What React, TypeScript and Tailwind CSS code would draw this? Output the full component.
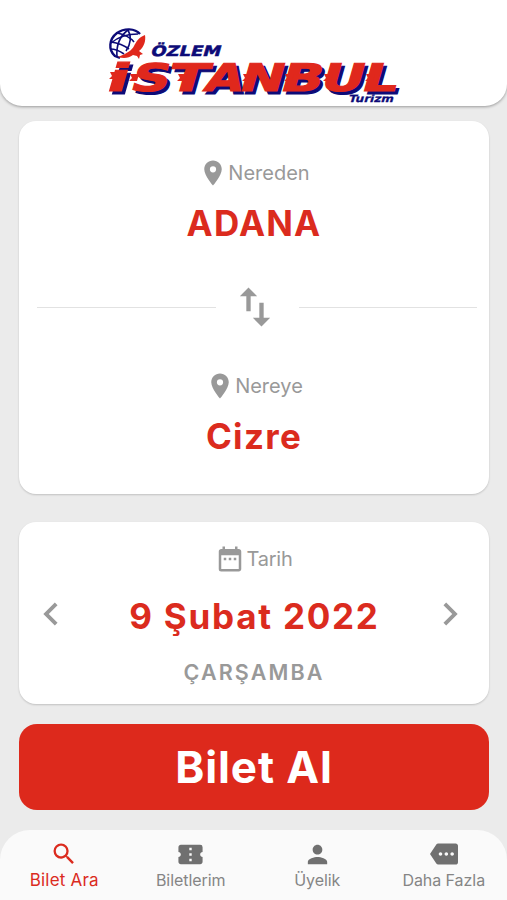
import type { ReactNode } from "react";
import {
  MdChevronLeft,
  MdChevronRight,
  MdConfirmationNumber,
  MdDateRange,
  MdMore,
  MdPerson,
  MdPlace,
  MdSearch,
  MdSwapVert,
} from "react-icons/md";

// Letter, left edge on the baseline and drawn width of the wordmark.
const letters: [string, number, number][] = [
  ["i", -3, 22],
  ["S", 21, 39],
  ["T", 58, 40],
  ["A", 95, 38],
  ["N", 130, 44],
  ["B", 171, 42],
  ["U", 211, 43],
  ["L", 252, 36],
];

// Speed marks on the left side of the letters.
const spikes = [
  [115, 74], [135, 76], [183, 76], [248, 76], [290, 76], [329, 76], [371, 76],
];

function Wordmark({ x, y, color }: { x: number; y: number; color: string }) {
  return (
    <text
      transform={`translate(${x} ${y}) skewX(-16)`}
      fontSize="38"
      fill={color}
      stroke={color}
      strokeWidth="1.1"
      strokeLinejoin="miter"
    >
      {letters.map(([letter, left, width]) => (
        <tspan key={left} x={left} textLength={width} lengthAdjust="spacingAndGlyphs">
          {letter}
        </tspan>
      ))}
    </text>
  );
}

function Logo() {
  return (
    <svg viewBox="100 22 310 84" className="h-[84px] w-[310px]" aria-label="Özlem İstanbul Turizm">
      <g fill="none" stroke="#0d0b78" strokeWidth="1.6">
        <path d="M141 34C136 28 125 28 118 33C110 39 109 50 116 56L121 58" strokeWidth="2.4" />
        <path d="M129 30C121 36 117 45 118 57" />
        <path d="M129 30C133 37 131 45 127 51" />
        <path d="M118 33C125 34 132 38 135 42" />
        <path d="M112 42C119 43 126 46 130 49" />
        <path d="M111 49C116 49 121 51 125 54" />
        <path d="M112 43C119 37 129 34 139 34" />
      </g>
      <path
        d="M146 35C140 37 137 42 135 46C133 50 129 53 119 57C125 59 130 58 134 55L138 56L140 59L141 55L144 54L140 51C145 47 147 41 146 35Z"
        fill="#e0281c"
      />
      <g fontFamily="'DejaVu Sans', 'Liberation Sans', sans-serif" fontWeight="700">
        <text
          transform="translate(151 55.5) skewX(-16)"
          fontSize="14.5"
          textLength="70"
          lengthAdjust="spacingAndGlyphs"
          fill="#0d0b78"
          stroke="#0d0b78"
          strokeWidth="0.5"
        >
          ÖZLEM
        </text>
        <Wordmark x={111.5} y={93.5} color="#0d0b78" />
        <Wordmark x={108.5} y={90.5} color="#e0281c" />
        <text
          transform="translate(349 102) skewX(-16)"
          fontSize="10"
          textLength="45"
          lengthAdjust="spacingAndGlyphs"
          fill="#0d0b78"
          stroke="#0d0b78"
          strokeWidth="0.3"
        >
          Turizm
        </text>
      </g>
      {spikes.map(([x, y]) => (
        <path key={x} d={`M${x - 4} ${y - 2}h9l-2 7h-8l3-3z`} fill="#e0281c" />
      ))}
    </svg>
  );
}

function Caption({ icon, children }: { icon: ReactNode; children: ReactNode }) {
  return (
    <div className="flex h-[30px] items-center justify-center text-xl leading-[30px] text-[#999]">
      {icon}
      {children}
    </div>
  );
}

function Tab({ icon, label, active = false }: { icon: ReactNode; label: string; active?: boolean }) {
  return (
    <button
      className={
        active
          ? "flex flex-1 flex-col items-center pl-px text-[17px] tracking-[0.2px] text-[#db2b1e]"
          : "flex flex-1 flex-col items-center text-base tracking-[-0.05px] text-[#858585]"
      }
    >
      <span className={active ? "flex h-7 items-center" : "flex h-7 items-center text-[#707070]"}>{icon}</span>
      <span className="leading-6 whitespace-nowrap">{label}</span>
    </button>
  );
}

export default function App() {
  return (
    <div className="flex h-[900px] w-[507px] flex-col overflow-hidden bg-[#ebebeb] font-['Inter','Liberation_Sans',sans-serif]">
      <header className="flex h-[106px] shrink-0 justify-center rounded-b-[22px] bg-white pt-[22px] shadow-[0_1px_3px_rgba(0,0,0,0.35)]">
        <Logo />
      </header>

      <main className="flex flex-1 flex-col pr-[18px] pl-[19px] pt-[15px]">
        <section className="flex h-[373px] flex-col rounded-[17px] bg-white pt-[37px] shadow-[0_1px_2px_rgba(0,0,0,0.18)]">
          <Caption icon={<MdPlace size={30} />}>Nereden</Caption>
          <div className="mt-[15px] text-center text-[35px] leading-10 font-bold tracking-[1.2px] text-[#db2b1e]">
            ADANA
          </div>
          <div className="mt-[38px] flex h-[52px] items-center pr-3 pl-[18px]">
            <div className="h-px flex-1 bg-[#e2e2e2]" />
            <div className="flex w-[83px] justify-center pr-1 text-[#999]">
              <MdSwapVert size={52} />
            </div>
            <div className="h-px flex-1 bg-[#e2e2e2]" />
          </div>
          <div className="mt-[38px]">
            <Caption icon={<MdPlace size={30} />}>Nereye</Caption>
          </div>
          <div className="mt-[15px] text-center text-[35px] leading-10 font-bold tracking-[1.3px] text-[#db2b1e]">
            Cizre
          </div>
        </section>

        <section className="mt-7 flex h-[182px] flex-col rounded-[17px] bg-white pt-[22px] shadow-[0_1px_2px_rgba(0,0,0,0.18)]">
          <Caption icon={<MdDateRange size={30} />}>
            <span className="pl-px tracking-[-0.2px]">Tarih</span>
          </Caption>
          <div className="mt-[17px] flex h-[46px] items-center justify-between pr-4 pl-[9px] text-[#999]">
            <MdChevronLeft size={46} />
            <span className="pt-[3px] pl-[8px] text-[35px] leading-10 font-bold tracking-[1.75px] text-[#db2b1e]">
              9 Şubat 2022
            </span>
            <MdChevronRight size={46} />
          </div>
          <div className="mt-[20px] text-center text-[21.5px] leading-[30px] font-semibold tracking-[2.1px] text-[#999]">
            ÇARŞAMBA
          </div>
        </section>

        <button className="mt-5 h-[86px] rounded-[18px] bg-[#dd291c] text-[44px] leading-[86px] font-bold tracking-[0.9px] text-white">
          Bilet Al
        </button>
      </main>

      <nav className="flex h-[70px] shrink-0 rounded-t-[30px] bg-[#fafafa] pt-[10px]">
        <Tab active icon={<MdSearch size={28} />} label="Bilet Ara" />
        <Tab icon={<MdConfirmationNumber size={29} />} label="Biletlerim" />
        <Tab icon={<MdPerson size={29} />} label="Üyelik" />
        <Tab icon={<MdMore size={28} />} label="Daha Fazla" />
      </nav>
    </div>
  );
}
